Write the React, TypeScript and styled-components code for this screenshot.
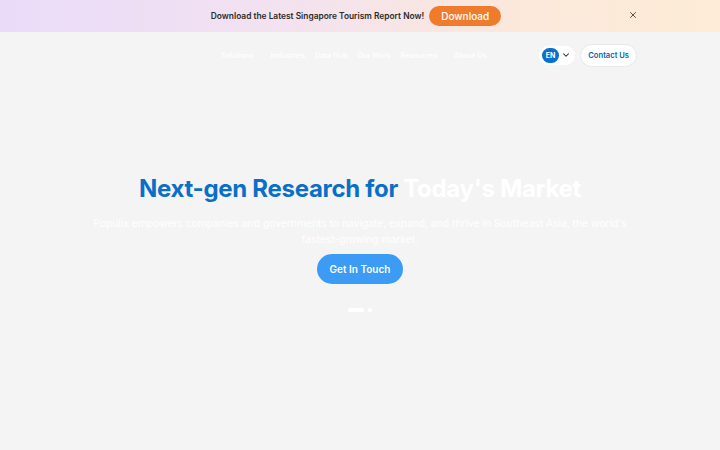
import styled, { createGlobalStyle } from 'styled-components';
import { ChevronDown, X } from 'lucide-react';

const GlobalStyle = createGlobalStyle`
  html, body {
    margin: 0;
    padding: 0;
    background: #f4f4f4;
    font-family: Inter, 'Noto Sans', Arial, sans-serif;
  }
`;

// Top announcement strip
const Banner = styled.div`
  height: 32px;
  background: linear-gradient(90deg, #eadbfa 0%, #f3e2ef 40%, #fbe8dc 70%, #fdecd6 100%);
  display: flex;
  align-items: center;
  justify-content: center;
  position: relative;
  gap: 5px;
  padding-right: 8px;
`;

const BannerText = styled.span`
  font-size: 8.4px;
  font-weight: 600;
  color: #2a2a2a;
`;

const DownloadButton = styled.button`
  background: #f07b2c;
  color: #fff;
  border: none;
  border-radius: 999px;
  height: 20px;
  width: 72px;
  font-family: inherit;
  font-size: 10px;
  font-weight: 500;
  cursor: pointer;
`;

const CloseButton = styled.button`
  position: absolute;
  right: 82px;
  top: 10px;
  background: none;
  border: none;
  padding: 0;
  display: flex;
  color: #333;
`;

const Header = styled.header`
  height: 46px;
  display: flex;
  align-items: center;
`;

const Nav = styled.nav`
  display: flex;
  gap: 10px;
  margin-left: 221px;
`;

const NavLink = styled.a<{ $wide?: boolean }>`
  color: #fff;
  font-size: 7.3px;
  font-weight: 500;
  margin-right: ${p => (p.$wide ? '7px' : '0')};
`;

const Actions = styled.div`
  margin-left: auto;
  margin-right: 83px;
  display: flex;
  align-items: center;
  gap: 5px;
`;

const LangPicker = styled.div`
  display: flex;
  align-items: center;
  gap: 2px;
  background: #fff;
  border-radius: 999px;
  padding: 2px 4px 2px 3px;
  color: #222;
`;

const LangBadge = styled.span`
  background: #0a6fcf;
  color: #fff;
  font-size: 7px;
  font-weight: 700;
  border-radius: 999px;
  padding: 3px 4px;
`;

const ContactButton = styled.button`
  background: #fff;
  border: 1px solid #e8e8e8;
  border-radius: 999px;
  height: 23px;
  padding: 0 7px;
  color: #0b5fa8;
  font-family: inherit;
  font-size: 7.6px;
  font-weight: 600;
`;

const Hero = styled.section`
  display: flex;
  flex-direction: column;
  align-items: center;
  padding-top: 96px;
  text-align: center;
`;

const Title = styled.h1`
  margin: 0;
  font-size: 24px;
  font-weight: 700;
  letter-spacing: -0.3px;
  color: #0b6fc8;
`;

const Highlight = styled.span`
  color: #fff;
`;

const Lead = styled.p`
  margin: 12px 0 0;
  width: 560px;
  font-size: 10.3px;
  line-height: 16px;
  color: #fff;
`;

const CtaButton = styled.button`
  margin-top: 7px;
  height: 30px;
  width: 86px;
  border: none;
  border-radius: 999px;
  background: #3b9bf5;
  color: #fff;
  font-family: inherit;
  font-size: 10px;
  font-weight: 600;
`;

const Dots = styled.div`
  margin-top: 24px;
  display: flex;
  align-items: center;
  gap: 4px;
`;

const Dot = styled.span<{ $active?: boolean }>`
  display: block;
  height: 4px;
  width: ${p => (p.$active ? '16px' : '4px')};
  border-radius: 999px;
  background: #fff;
`;

export default function App() {
  return (
    <>
      <GlobalStyle />
      <Banner>
        <BannerText>Download the Latest Singapore Tourism Report Now!</BannerText>
        <DownloadButton>Download</DownloadButton>
        <CloseButton aria-label="Close">
          <X size={10} strokeWidth={2} />
        </CloseButton>
      </Banner>
      <Header>
        <Nav>
          <NavLink $wide>Solutions</NavLink>
          <NavLink>Industries</NavLink>
          <NavLink>Data Hub</NavLink>
          <NavLink>Our Work</NavLink>
          <NavLink $wide>Resources</NavLink>
          <NavLink>About Us</NavLink>
        </Nav>
        <Actions>
          <LangPicker>
            <LangBadge>EN</LangBadge>
            <ChevronDown size={10} strokeWidth={2.5} />
          </LangPicker>
          <ContactButton>Contact Us</ContactButton>
        </Actions>
      </Header>
      <Hero>
        <Title>
          Next-gen Research for <Highlight>Today's Market</Highlight>
        </Title>
        <Lead>
          Populix empowers companies and governments to navigate, expand, and thrive in Southeast Asia, the world's
          fastest-growing market.
        </Lead>
        <CtaButton>Get In Touch</CtaButton>
        <Dots>
          <Dot $active />
          <Dot />
        </Dots>
      </Hero>
    </>
  );
}
